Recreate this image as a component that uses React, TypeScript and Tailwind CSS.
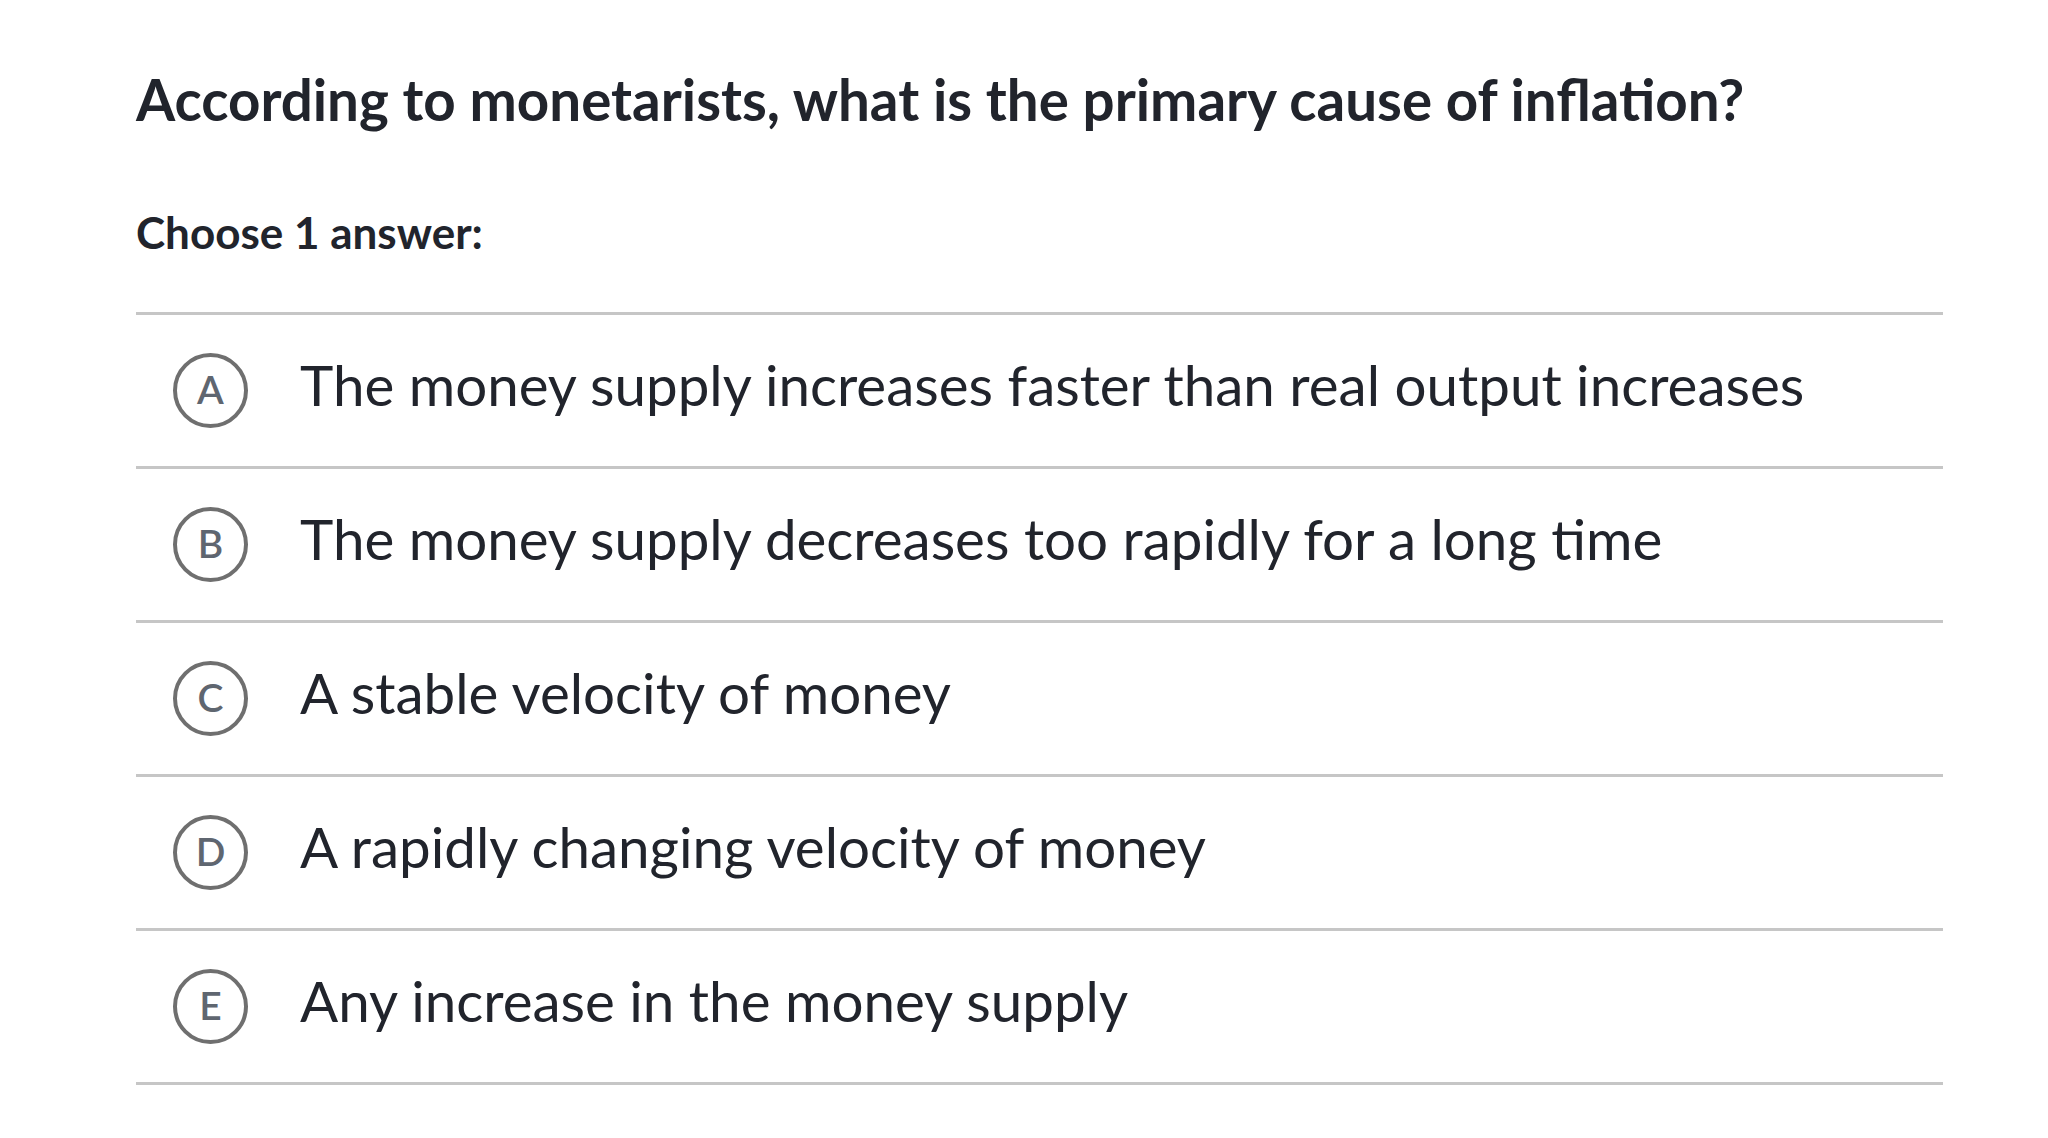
const choices = [
  { letter: "A", text: "The money supply increases faster than real output increases" },
  { letter: "B", text: "The money supply decreases too rapidly for a long time" },
  { letter: "C", text: "A stable velocity of money" },
  { letter: "D", text: "A rapidly changing velocity of money" },
  { letter: "E", text: "Any increase in the money supply" },
];

export default function App() {
  return (
    <div
      className="min-h-screen bg-white text-[#21242c]"
      style={{ fontFamily: "Lato, 'Noto Sans', sans-serif" }}
    >
      <div className="w-[1807px] ml-[136px] pt-[66px]">
        <h1 className="text-[56.5px] leading-[67px] font-bold">
          According to monetarists, what is the primary cause of inflation?
        </h1>
        <p className="mt-[74px] text-[44px] leading-[50px] font-bold">Choose 1 answer:</p>

        <ul className="mt-[55px] border-t-[3px] border-[#c6c6c6]">
          {choices.map((c) => (
            <li
              key={c.letter}
              className="h-[154px] flex items-center border-b-[3px] border-[#c6c6c6]"
            >
              <span className="ml-[37px] w-[75px] h-[75px] shrink-0 rounded-full border-[4px] border-[#6f6f6f] flex items-center justify-center pb-[3px] text-[39px] leading-none font-semibold text-[#5f6670]">
                {c.letter}
              </span>
              <span className="ml-[52px] pb-[12px] text-[56.5px] leading-none">{c.text}</span>
            </li>
          ))}
        </ul>
      </div>
    </div>
  );
}
